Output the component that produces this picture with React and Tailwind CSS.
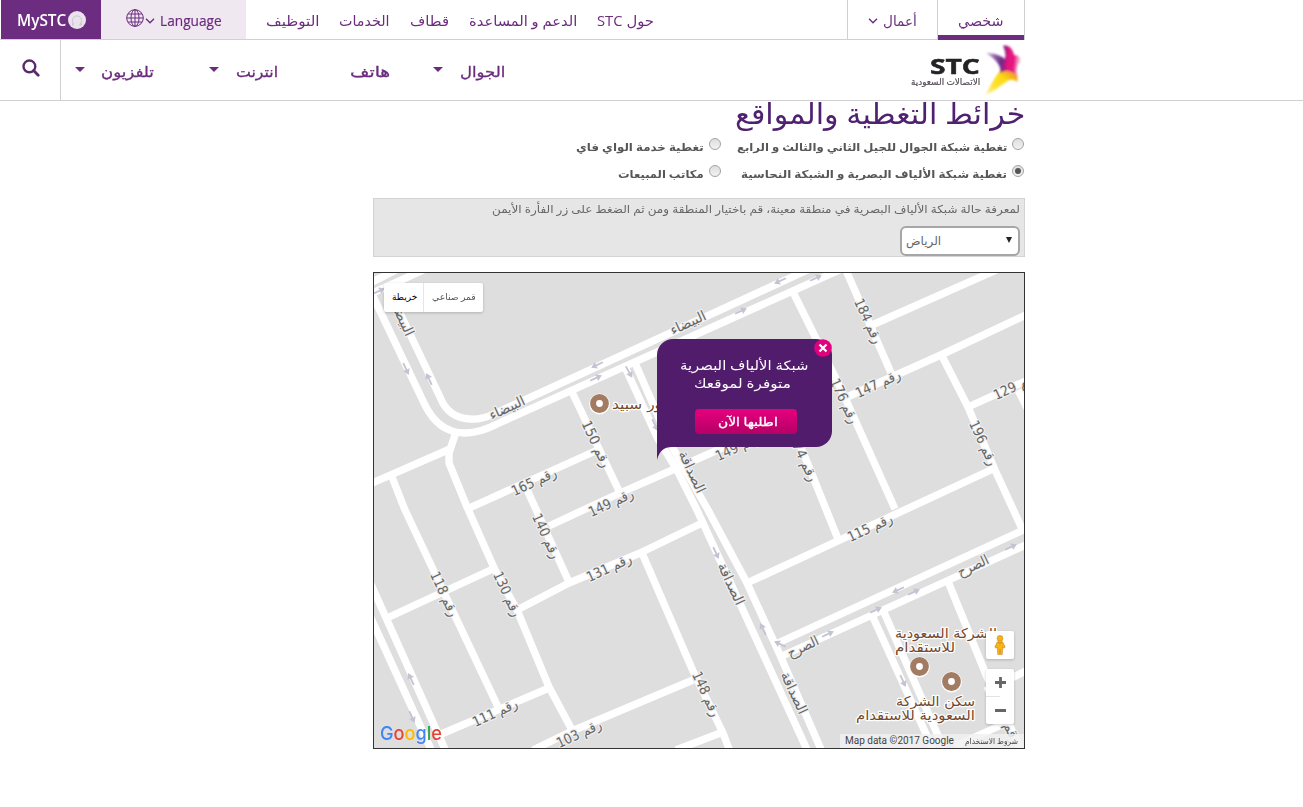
import { useLayoutEffect, useRef } from 'react';

// Text set to an exact advance width, keeping the Arabic letters joined.
function Fit({ w, className = '', dir = 'rtl', children }) {
  const outer = useRef(null);
  const inner = useRef(null);
  useLayoutEffect(() => {
    const natural = inner.current.offsetWidth;
    outer.current.style.width = `${w}px`;
    inner.current.style.transform = `scaleX(${w / natural})`;
  }, [w]);
  return (
    <span ref={outer} dir="ltr" className={`block shrink-0 ${className}`}>
      <span ref={inner} dir={dir} className="inline-block origin-left whitespace-nowrap">{children}</span>
    </span>
  );
}

function Chevron({ className }) {
  return (
    <svg viewBox="0 0 10 6" className={className} fill="none" stroke="currentColor" strokeWidth="1.3">
      <path d="M1 .8 5 4.8 9 .8" />
    </svg>
  );
}

function Caret({ className }) {
  return (
    <svg viewBox="0 0 10 5" className={`h-[5px] w-[10px] shrink-0 ${className}`} fill="currentColor">
      <path d="M0 0H10L5 5Z" />
    </svg>
  );
}

function TopBar() {
  return (
    <div className="flex h-10 w-[1025px] border-b border-[#d0cfd1] pl-px text-[#6b2c7e]">
      <div className="flex w-[100px] items-center bg-[#6c2d80] pl-4 text-white">
        <Fit w={49} dir="ltr" className="text-[16px] leading-5 font-semibold">MySTC</Fit>
        <svg viewBox="0 0 18 18" className="ml-0.5 h-[18px] w-[18px]">
          <circle cx="9" cy="9" r="9" fill="#e9e3ec" />
          <path d="M6 14H4.5V12.8H5.8A4.6 4.6 0 1 1 12.2 12.8H13.5V14H11" fill="none" stroke="#c4bcc8" strokeWidth=".8" />
        </svg>
      </div>
      <div className="flex w-[145px] items-center bg-[#efe8f1] pl-[25px]">
        <svg viewBox="0 0 18 18" className="mb-1 h-[18px] w-[18px]" fill="none" stroke="currentColor">
          <circle cx="9" cy="9" r="8.3" />
          <ellipse cx="9" cy="9" rx="4" ry="8.3" />
          <path d="M9 .7V17.3M.7 9H17.3M2 5H16M2 13H16" />
        </svg>
        <Chevron className="mt-0.5 ml-px h-[6px] w-[10px]" />
        <Fit w={62} dir="ltr" className="ml-[5px] text-[15px] leading-5 font-medium [-webkit-text-stroke:0.2px]">Language</Fit>
      </div>
      <div className="flex items-center gap-5 pt-0.5 pl-5 text-[14px] leading-5">
        <Fit w={53}>التوظيف</Fit>
        <Fit w={51}>الخدمات</Fit>
        <Fit w={39}>قطاف</Fit>
        <Fit w={108}>الدعم و المساعدة</Fit>
        <Fit w={57}>حول STC</Fit>
      </div>
      <div className="ml-auto flex text-[14px] leading-5">
        <div className="flex w-[90px] items-center border-l border-[#d0cfd1] pt-0.5 pl-5">
          <Chevron className="h-[6px] w-[10px]" />
          <Fit w={34} className="ml-[5px]">أعمال</Fit>
        </div>
        <div className="flex h-10 w-[88px] flex-col justify-between border-x border-[#d0cfd1]">
          <Fit w={46} className="pt-[11px] pl-5">شخصي</Fit>
          <div className="h-[5px] bg-[#6c2d80]" />
        </div>
      </div>
    </div>
  );
}

function Logo() {
  return (
    <div className="flex h-[60px] items-center">
      <div className="flex w-[70px] flex-col items-end">
        <Fit w={50} dir="ltr" className="h-[23px] text-[22px] leading-[24px] font-bold text-[#242225] [-webkit-text-stroke:0.5px]">STC</Fit>
        <Fit w={69} className="h-[12px] text-[9px] leading-[12px] text-[#555057] [-webkit-text-stroke:0.2px]">الاتصالات السعودية</Fit>
      </div>
      <svg viewBox="0 0 44 56" className="h-[56px] w-[44px]">
        <defs>
          <linearGradient id="wing" x1="0" x2="1" y1="0" y2=".1">
            <stop offset="0" stopColor="#d9c8e0" />
            <stop offset=".3" stopColor="#8f5fa5" />
            <stop offset=".5" stopColor="#6a2b86" />
            <stop offset=".68" stopColor="#e5127f" />
            <stop offset=".85" stopColor="#e5127f" />
            <stop offset="1" stopColor="#f7bcd1" />
          </linearGradient>
          <linearGradient id="tail" x1="1" x2="0" y1="0" y2="1">
            <stop offset="0" stopColor="#ef7d2a" />
            <stop offset=".4" stopColor="#fcdc16" />
            <stop offset=".7" stopColor="#fde23a" />
            <stop offset="1" stopColor="#fff3bb" />
          </linearGradient>
          <filter id="soft" x="-20%" y="-20%" width="140%" height="140%"><feGaussianBlur stdDeviation="1.2" /></filter>
        </defs>
        <g filter="url(#soft)">
          <path d="M21 28L36 29C38 34 38 38 37 40C34 37 30 37 26 40C19 45 12 51 5 53C10 46 14 35 21 28Z" fill="url(#tail)" />
          <path d="M23 4C29 2 33 8 34 13C38 13 42 16 40 20C36 23 37 29 36 33C31 28 25 28 20 31C22 25 17 18 6 11C13 11 20 13 25 17C26 12 25 8 23 4Z" fill="url(#wing)" />
        </g>
      </svg>
    </div>
  );
}

function MainNav() {
  return (
    <div className="h-[61px] border-b border-[#d0cfd1]">
      <div className="flex h-[60px] w-[1024px] items-center text-[15px] leading-6 text-[#6b2c7e]">
        <div className="flex h-[60px] w-[61px] items-center border-r border-[#d0cfd1] pb-1 pl-[22px]">
          <svg viewBox="0 0 18 18" className="h-[18px] w-[18px]" fill="none" stroke="#5b2a6d" strokeWidth="2.4">
            <circle cx="7.4" cy="7.4" r="5.9" />
            <path d="m11.6 11.6 4.6 4.6" strokeWidth="2.8" strokeLinecap="round" />
          </svg>
        </div>
        <div className="flex items-center pt-0.5 [-webkit-text-stroke:0.3px]">
          <Caret className="mr-4 mb-1 ml-[14px]" />
          <Fit w={53}>تلفزيون</Fit>
          <Caret className="mr-[17px] mb-1 ml-[55px]" />
          <Fit w={42}>انترنت</Fit>
          <Fit w={40} className="ml-[72px]">هاتف</Fit>
          <Caret className="mr-[17px] mb-1 ml-[43px]" />
          <Fit w={45}>الجوال</Fit>
        </div>
        <div className="ml-auto"><Logo /></div>
      </div>
    </div>
  );
}

function Radio({ checked }) {
  return (
    <span className="mb-[5px] ml-[5px] flex h-[12px] w-[12px] shrink-0 items-center justify-center rounded-full border border-[#a3a3a3] bg-linear-to-b from-[#dedede] to-[#f2f2f2]">
      {checked && <span className="h-[6px] w-[6px] rounded-full bg-[#555]" />}
    </span>
  );
}

function Option({ w, checked, children }) {
  return (
    <div className="flex items-center justify-end pr-px">
      <Fit w={w}>{children}</Fit>
      <Radio checked={checked} />
    </div>
  );
}

const roads = [
  'M366 296 432 266', 'M366 285 396 270',
  'M370 290 424 403Q438 433 465 433Q480 433 497 424L846 267',
  'M388 288 440 397Q448 418 470 419Q481 420 494 414L816 266',
  'M572 392 620 493', 'M370 484 450 449', 'M456 432 449 453V463L467 507 495 570 517 610 549 687 572 730',
  'M392 477 405 510 499 709', 'M467 509 602 448', 'M524 483 569 582', 'M549 526 620 493 677 468 790 418',
  'M517 610 569 583 640 553 700 524', 'M387 618 495 568', 'M370 582 448 756', 'M370 616 434 756',
  'M439 735 549 688', 'M533 750 572 731 693 680', 'M642 553 693 671 723 733 731 754', 'M676 750 723 732',
  'M747 583 993 469', 'M792 290 842 391 895 509', 'M845 268 892 375', 'M845 398 943 354 1030 313',
  'M872 325 1003 267', 'M942 356 968 407 995 470 1024 533', 'M968 407 1030 379', 'M1018 390 1030 414',
  'M770 378 805 457 838 539', 'M778 643 1030 527', 'M780 657 1030 543',
  'M872 615 936 756', 'M883 610 947 756', 'M947 579 987 677 1024 756', 'M985 691 1030 669', 'M955 746 1008 722',
  'M625 367 657 437 677 470 697 510 809 754', 'M635 363 670 443 708 510 747 583 780 655 823 754',
];

const NE = -25;
const SE = 65;
const labels = [
  ['البيضاء', 688, 323, NE, 38], ['البيضاء', 507, 408, NE, 38], ['البيضاء', 402, 318, SE, 38],
  ['رقم 165', 534, 482, NE, 48], ['رقم 150', 596, 444, SE, 50], ['رقم 149', 611, 503, NE, 48],
  ['رقم 149', 738, 447, NE, 48], ['رقم 140', 546, 536, SE, 48], ['رقم 131', 609, 568, NE, 48],
  ['رقم 130', 507, 594, SE, 48], ['رقم 118', 444, 594, SE, 48], ['رقم 111', 495, 713, NE, 48],
  ['رقم 103', 579, 734, NE, 48], ['رقم 148', 706, 694, SE, 48], ['رقم 174', 803, 458, SE, 50],
  ['رقم 176', 844, 401, SE, 48], ['رقم 184', 868, 321, SE, 48], ['رقم 147', 878, 384, NE, 48],
  ['رقم 129', 1016, 386, NE, 48], ['رقم 196', 983, 443, SE, 48], ['رقم 115', 870, 528, NE, 48],
  ['الصداقة', 692, 472, SE, 45], ['الصداقة', 731, 584, SE, 45], ['الصداقة', 794, 693, SE, 45],
  ['الصرح', 973, 566, NE, 33], ['الصرح', 803, 647, NE, 33], ['رقم', 1012, 733, SE, 22],
];

const arrows = [
  [780, 281, 155], [741, 311, -25], [597, 365, 155], [596, 378, -25], [629, 372, 60], [655, 425, 65],
  [379, 291, -25], [406, 369, 65], [429, 379, 245], [411, 679, 245], [412, 717, 65], [716, 553, 65],
  [763, 629, 245], [780, 644, 205], [816, 278, -25], [898, 590, 155], [914, 592, -25], [876, 610, -25],
  [828, 634, -25], [1011, 547, -25], [903, 681, 65],
];

const places = [
  ['ور سبيد', 612, 409, 50], ['الشركة السعودية', 895, 638, 102], ['للاستقدام', 895, 652, 60],
  ['سكن الشركة', 896, 706, 79], ['السعودية للاستقدام', 856, 720, 119],
];

const pins = [[599, 403], [919, 666], [951, 681]];

function MapDrawing() {
  return (
    <svg viewBox="374 273 650 475" className="block h-[475px] w-[650px]">
      <rect x="374" y="273" width="650" height="475" fill="#dedede" />
      <g fill="none" stroke="#fff" strokeWidth="7.4" strokeLinejoin="round">
        {roads.map((d) => <path key={d} d={d} />)}
      </g>
      <g fill="#c3c3d3">
        {arrows.map(([x, y, a]) => (
          <path key={`${x}-${y}`} transform={`translate(${x} ${y}) rotate(${a})`} d="M-6.5-.9H1L.6-3.6 6.5 0 .6 3.6 1 .9H-6.5Z" />
        ))}
      </g>
      <g fontFamily="'DejaVu Sans', sans-serif" fontSize="14" fill="#666" stroke="#f0f0f0" strokeWidth="2.4" strokeLinejoin="round" paintOrder="stroke" textAnchor="middle" direction="rtl">
        {labels.map(([t, x, y, a, len]) => (
          <text key={`${x}-${y}`} transform={`translate(${x} ${y}) rotate(${a})`} y="4.5" textLength={len} lengthAdjust="spacingAndGlyphs">{t}</text>
        ))}
      </g>
      <g fontFamily="'DejaVu Sans', sans-serif" fontSize="13.5" fill="#73492f" stroke="#fff" strokeWidth="2.4" strokeLinejoin="round" paintOrder="stroke" textAnchor="middle" direction="rtl">
        {places.map(([t, x, y, len]) => (
          <text key={t} x={x + len / 2} y={y} textLength={len} lengthAdjust="spacingAndGlyphs">{t}</text>
        ))}
      </g>
      {pins.map(([x, y]) => (
        <g key={x}>
          <circle cx={x + 0.5} cy={y + 1} r="10.4" fill="#fff" />
          <circle cx={x + 0.5} cy={y + 0.5} r="6.4" fill="#fff" stroke="#a27b62" strokeWidth="6" />
        </g>
      ))}
    </svg>
  );
}

function Popup() {
  return (
    <div className="absolute top-[66px] left-[283px] w-[175px]">
      <div className="flex h-[108px] flex-col items-center rounded-[16px] rounded-bl-none bg-[#511c6c] pt-[17px] text-[13px] leading-[18px] text-white">
        <Fit w={129}>شبكة الألياف البصرية</Fit>
        <Fit w={97} className="mr-1">متوفرة لموقعك</Fit>
        <button className="mt-[17px] ml-0.5 flex h-[25px] w-[102px] items-center justify-center rounded-[4px] bg-linear-to-b from-[#e6007e] to-[#b50066] text-[12px] [-webkit-text-stroke:0.3px]">
          <Fit w={60} className="mr-1">اطلبها الآن</Fit>
        </button>
      </div>
      <svg viewBox="0 0 15 13" className="block h-[13px] w-[15px]"><path d="M0-1H15V0Q3 0 0 13Z" fill="#511c6c" /></svg>
      <svg viewBox="0 0 18 18" className="absolute top-0 right-0 h-[18px] w-[18px]">
        <circle cx="9" cy="9" r="8.8" fill="#e2007c" />
        <path d="m5.5 5.5 7 7M12.5 5.5l-7 7" stroke="#fff" strokeWidth="2.2" />
      </svg>
    </div>
  );
}

function MapPanel() {
  return (
    <div className="relative mt-[15px] h-[477px] w-[652px] overflow-hidden border border-[#333]">
      <MapDrawing />
      <Popup />
      <div className="absolute top-[10px] left-[10px] flex h-[29px] w-[99px] items-center rounded-[2px] bg-white pb-0.5 text-[9px] leading-4 shadow-[0_1px_3px_rgba(0,0,0,0.2)]">
        <div className="-mb-0.5 flex h-[29px] w-10 items-center border-r border-[#e6e6e6] pb-0.5 pl-2 text-black"><Fit w={25}>خريطة</Fit></div>
        <div className="pl-2 text-[#565656]"><Fit w={44}>قمر صناعي</Fit></div>
      </div>
      <div className="absolute top-[358px] left-[612px] flex h-7 w-7 items-center justify-center rounded-[2px] bg-white shadow-[0_1px_3px_rgba(0,0,0,0.2)]">
        <svg viewBox="0 0 12 20" className="h-[20px] w-[12px]">
          <path d="M3.4 6.8H8.6L11.2 12 10 13.2 8.7 12 8.2 19.5H6.4L6 14.5 5.6 19.5H3.8L3.3 12 2 13.2 .8 12Z" fill="#f8b21a" stroke="#c98616" strokeWidth=".6" />
          <circle cx="6" cy="3.4" r="2.9" fill="#f8b21a" stroke="#c98616" strokeWidth=".6" />
          <path d="M4 7 6 8.6 8 7" fill="none" stroke="#c98616" strokeWidth=".8" />
        </svg>
      </div>
      <div className="absolute top-[396px] left-[612px] flex h-[55px] w-7 flex-col items-center rounded-[2px] bg-white shadow-[0_1px_3px_rgba(0,0,0,0.2)]">
        <svg viewBox="0 0 28 55" className="h-[55px] w-[28px]">
          <path d="M9 13.5H20M14.5 8V19M9 41.5H20" stroke="#666" strokeWidth="2.8" />
          <path d="M0 27.5H14" stroke="#e3e3e3" />
        </svg>
      </div>
      <div className="absolute top-[448px] left-[6px] flex h-[26px] items-center text-[#4285f4]">
        <Fit w={62} dir="ltr" className="font-[Inter,sans-serif] text-[19px] leading-[26px] font-medium">
          <span>G</span><span className="text-[#ea4335]">o</span><span className="text-[#fbbc05]">o</span><span>g</span><span className="text-[#34a853]">l</span><span className="text-[#ea4335]">e</span>
        </Fit>
      </div>
      <div className="absolute right-0 bottom-0 flex h-[14px] w-[184px] items-center bg-[#f1f1f1]/85 text-[10px] leading-[14px] text-[#444]">
        <Fit w={109} dir="ltr" className="ml-[5px] font-[Roboto,sans-serif]">Map data ©2017 Google</Fit>
        <Fit w={53} className="ml-[11px] text-[8px]">شروط الاستخدام</Fit>
      </div>
    </div>
  );
}

export default function App() {
  return (
    <div className="h-[807px] w-full overflow-hidden bg-white font-['Open_Sans','DejaVu_Sans',sans-serif]">
      <TopBar />
      <MainNav />
      <main className="ml-[373px] w-[652px]">
        <div className="flex h-[32px] items-end justify-end">
          <Fit w={290} className="h-[42px] text-[29px] leading-[44px] text-[#4f2170]">خرائط التغطية والمواقع</Fit>
        </div>
        <div className="grid h-[65px] grid-cols-[349px_303px] grid-rows-[27px_27px] text-[11px] leading-4 font-bold text-[#575757]">
          <Option w={128}>تغطية خدمة الواي فاي</Option>
          <Option w={270}>تغطية شبكة الجوال للجيل الثاني والثالث و الرابع</Option>
          <Option w={86}>مكاتب المبيعات</Option>
          <Option w={266} checked>تغطية شبكة الألياف البصرية و الشبكة النحاسية</Option>
        </div>
        <div className="flex h-[59px] flex-col items-end border border-[#d3d3d3] bg-[#e6e6e6] pr-1 text-[11px] text-[#666]">
          <Fit w={528} className="h-[27px] leading-[19px]">لمعرفة حالة شبكة الألياف البصرية في منطقة معينة، قم باختيار المنطقة ومن ثم الضغط على زر الفأرة الأيمن</Fit>
          <div className="flex h-[30px] w-[120px] shrink-0 items-center justify-between rounded-[6px] border-2 border-[#a6a6a6] bg-white pr-[6px] pl-1 text-[12px]">
            <Fit w={35}>الرياض</Fit>
            <svg viewBox="0 0 6 6" className="mb-0.5 h-[6px] w-[6px]"><path d="M0 0H6L3 6Z" fill="#222" /></svg>
          </div>
        </div>
        <MapPanel />
      </main>
    </div>
  );
}
